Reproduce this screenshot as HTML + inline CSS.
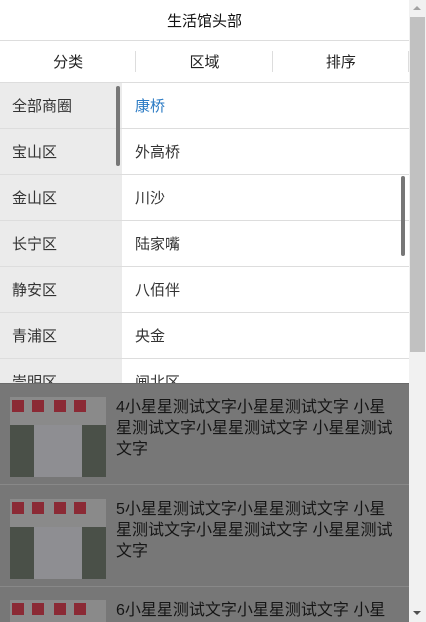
<!DOCTYPE html>
<html><head><meta charset="utf-8"><style>
*{margin:0;padding:0;box-sizing:border-box}
html,body{width:426px;height:622px;overflow:hidden}
body{background:#fff;font-family:"Liberation Sans","Noto Sans CJK SC",sans-serif;position:relative}
.hdr{position:absolute;left:0;top:0;width:409px;height:41px;border-bottom:1px solid #ddd;text-align:center;line-height:44px;font-size:15px;color:#111}
.tabs{position:absolute;left:0;top:41px;width:409px;height:42px;border-bottom:1px solid #ddd;display:flex}
.tabs div{flex:1;text-align:center;line-height:44px;font-size:15px;color:#222;position:relative}
.tabs div:after{content:"";position:absolute;right:0;top:10px;height:21px;border-right:1px solid #ddd}
.left{position:absolute;left:0;top:83px;width:122px;height:300px;background:#ebebeb;overflow:hidden}
.right{position:absolute;left:122px;top:83px;width:287px;height:300px;overflow:hidden}
.row{height:46px;padding-top:2px;line-height:44px;border-bottom:1px solid #ddd;font-size:15px;color:#333;padding-left:12px}
.right .row{padding-left:13px}
.sb1{position:absolute;left:116px;top:86px;width:4px;height:80px;background:#777;border-radius:2px}
.sb2{position:absolute;left:401px;top:176px;width:4px;height:80px;background:#777;border-radius:2px}
.ov{position:absolute;left:0;top:383px;width:409px;height:239px;background:#777;border-top:1px solid #6a6a6a;overflow:hidden}
.item{position:absolute;left:0;width:409px;height:101px;border-bottom:1px solid #888}
.img{position:absolute;left:10px;top:13px;width:96px;height:80px;background:#4a5048;overflow:hidden}
.img .t{position:absolute;left:0;top:0;width:96px;height:28px;background:#8a8a8a}
.img .t i{position:absolute;top:3px;width:12px;height:12px;background:#8b2a35}
.img .m{position:absolute;left:24px;top:28px;width:48px;height:52px;background:#8e8e92}
.txt{position:absolute;left:116px;top:13px;width:282px;font-size:16px;line-height:21px;color:#151515}
.psb{position:absolute;left:409px;top:0;width:17px;height:622px;background:#f1f1f1}
.psb .th{position:absolute;left:1px;top:17px;width:15px;height:335px;background:#c1c1c1}
</style></head><body>
<div class="hdr">生活馆头部</div>
<div class="tabs"><div>分类</div><div>区域</div><div>排序</div></div>
<div class="left">
<div class="row">全部商圈</div><div class="row">宝山区</div><div class="row">金山区</div><div class="row">长宁区</div><div class="row">静安区</div><div class="row">青浦区</div><div class="row">崇明区</div>
</div>
<div class="right">
<div class="row" style="color:#2a7ac4">康桥</div><div class="row">外高桥</div><div class="row">川沙</div><div class="row">陆家嘴</div><div class="row">八佰伴</div><div class="row">央金</div><div class="row">闸北区</div>
</div>
<div class="sb1"></div><div class="sb2"></div>
<div class="ov">
<div class="item" style="top:0">
<div class="img"><div class="t"><i style="left:2px"></i><i style="left:22px"></i><i style="left:44px"></i><i style="left:64px"></i></div><div class="m"></div></div>
<div class="txt">4小星星测试文字小星星测试文字 小星星测试文字小星星测试文字 小星星测试文字</div></div>
<div class="item" style="top:102px">
<div class="img"><div class="t"><i style="left:2px"></i><i style="left:22px"></i><i style="left:44px"></i><i style="left:64px"></i></div><div class="m"></div></div>
<div class="txt">5小星星测试文字小星星测试文字 小星星测试文字小星星测试文字 小星星测试文字</div></div>
<div class="item" style="top:203px">
<div class="img"><div class="t"><i style="left:2px"></i><i style="left:22px"></i><i style="left:44px"></i><i style="left:64px"></i></div><div class="m"></div></div>
<div class="txt">6小星星测试文字小星星测试文字 小星星测试文字小星星测试文字 小星星测试文字</div></div>
</div>
<div class="psb"><div style="position:absolute;left:4px;top:6px;border:4px solid transparent;border-bottom:4px solid #a3a3a3;border-top:0"></div><div class="th"></div><div style="position:absolute;left:4px;top:611px;border:4px solid transparent;border-top:4px solid #505050;border-bottom:0"></div></div>
</body></html>
